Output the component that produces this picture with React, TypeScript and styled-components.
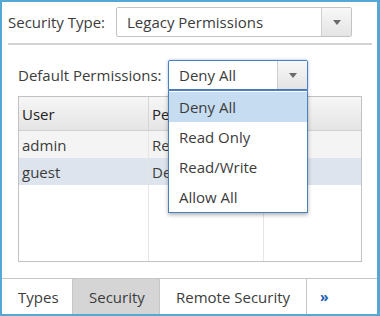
import styled, { createGlobalStyle } from "styled-components"

const Global = createGlobalStyle`
    body {
        margin: 0;
        font-family: "Open Sans", "Noto Sans", sans-serif;
        font-size: 15px;
        color: #3c3c3c;
    }
`

const Window = styled.div`
    width: 380px;
    height: 316px;
    box-sizing: border-box;
    border: 2px solid #55a8d5;
    border-right-width: 3px;
    background: white;
    display: flex;
    flex-direction: column;
`

const TopRow = styled.div`
    display: flex;
    align-items: center;
    margin: 5px 5px 0 6px;
`

const Label = styled.div<{ $width: number }>`
    width: ${p => p.$width}px;
    flex: none;
    white-space: nowrap;
`

const Select = styled.div<{ $width: number; $focused?: boolean }>`
    position: relative;
    width: ${p => p.$width}px;
    height: 30px;
    box-sizing: border-box;
    display: flex;
    border: 1px solid ${p => p.$focused ? "#4b7fc0" : "#c3c3c3"};
    border-radius: ${p => p.$focused ? "2px 2px 0 0" : "2px"};
    box-shadow: ${p => p.$focused ? "0 0 3px rgba(75, 127, 192, 0.55)" : "none"};
    background: white;
`

const SelectValue = styled.div`
    flex: 1;
    display: flex;
    align-items: center;
    padding-left: 10px;
    white-space: nowrap;
`

const ArrowButton = styled.div`
    width: 29px;
    border-left: 1px solid #cfcfcf;
    background: linear-gradient(#f8f8f8, #e4e4e4);
    display: flex;
    align-items: center;
    justify-content: center;
    &::after {
        content: "";
        border-left: 4px solid transparent;
        border-right: 4px solid transparent;
        border-top: 5px solid #6a6a6a;
    }
`

const Separator = styled.div`
    height: 2px;
    background: #d3d3d3;
    margin: 6px 5px 0 6px;
`

const Section = styled.div`
    padding: 15px 15px 0 16px;
    display: flex;
    flex-direction: column;
    gap: 6px;
`

const Row = styled.div`
    display: flex;
    align-items: center;
`

const Menu = styled.div`
    position: absolute;
    top: 29px;
    left: -1px;
    right: -1px;
    z-index: 2;
    background: white;
    border: 1px solid #4b7fc0;
    box-shadow: 0 2px 4px rgba(0, 0, 0, 0.3);
    padding-top: 1px;
`

const MenuItem = styled.div<{ $active?: boolean }>`
    height: 30px;
    display: flex;
    align-items: center;
    padding-left: 10px;
    background: ${p => p.$active ? "#c6dcf1" : "white"};
`

const Grid = styled.div`
    height: 166px;
    box-sizing: border-box;
    border: 1px solid #c2c2c2;
    display: grid;
    grid-template-columns: 130px 115px 1fr;
`

const Column = styled.div<{ $last?: boolean }>`
    display: flex;
    flex-direction: column;
    border-right: ${p => p.$last ? "none" : "1px solid #e6e6e6"};
`

const HeaderCell = styled.div<{ $last?: boolean }>`
    height: 33px;
    display: flex;
    align-items: center;
    padding-left: 3px;
    color: #222;
    background: linear-gradient(#f6f6f6, #e5e5e5);
    border-bottom: 1px solid #d0d0d0;
    margin-right: ${p => p.$last ? "0" : "-1px"};
    border-right: ${p => p.$last ? "none" : "1px solid #d6d6d6"};
`

const Cell = styled.div<{ $selected?: boolean }>`
    height: 27px;
    display: flex;
    align-items: center;
    padding-left: 3px;
    white-space: nowrap;
    overflow: hidden;
    background: ${p => p.$selected ? "#dde4ed" : "#f4f4f4"};
`

const Spacer = styled.div`
    flex: 1;
`

const TabBar = styled.div`
    height: 36px;
    box-sizing: border-box;
    border-top: 1px solid #c6c6c6;
    display: flex;
`

const Tab = styled.div<{ $active?: boolean; $width?: number }>`
    display: flex;
    align-items: center;
    padding-left: 16px;
    box-sizing: border-box;
    white-space: nowrap;
    border-right: ${p => p.$width ? "1px solid #c6c6c6" : "none"};
    background: ${p => p.$active ? "#d5d5d5" : "white"};
    width: ${p => p.$width ? `${p.$width}px` : "auto"};
    flex: ${p => p.$width ? "none" : 1};
`

const More = styled.span`
    color: #1a5db0;
    font-weight: bold;
    font-size: 14px;
    margin-left: -3px;
`

const users = [
    { name: "admin", access: "Read Only" },
    { name: "guest", access: "Deny All" },
]

const options = ["Deny All", "Read Only", "Read/Write", "Allow All"]

export default function App() {
    return <>
        <Global />
        <Window>
            <TopRow>
                <Label $width={108}>Security Type:</Label>
                <Select $width={236}>
                    <SelectValue>Legacy Permissions</SelectValue>
                    <ArrowButton />
                </Select>
            </TopRow>
            <Separator />
            <Section>
                <Row>
                    <Label $width={150}>Default Permissions:</Label>
                    <Select $width={140} $focused>
                        <SelectValue>Deny All</SelectValue>
                        <ArrowButton />
                        <Menu>
                            {options.map((o, i) => <MenuItem key={o} $active={i === 0}>{o}</MenuItem>)}
                        </Menu>
                    </Select>
                </Row>
                <Grid>
                    <Column>
                        <HeaderCell>User</HeaderCell>
                        {users.map((u, i) => <Cell key={u.name} $selected={i === 1}>{u.name}</Cell>)}
                    </Column>
                    <Column>
                        <HeaderCell>Permissions</HeaderCell>
                        {users.map((u, i) => <Cell key={u.name} $selected={i === 1}>{u.access}</Cell>)}
                    </Column>
                    <Column $last>
                        <HeaderCell $last />
                        {users.map((u, i) => <Cell key={u.name} $selected={i === 1} />)}
                    </Column>
                </Grid>
            </Section>
            <Spacer />
            <TabBar>
                <Tab $width={71}>Types</Tab>
                <Tab $width={87} $active>Security</Tab>
                <Tab $width={147}>Remote Security</Tab>
                <Tab><More>»</More></Tab>
            </TabBar>
        </Window>
    </>
}
